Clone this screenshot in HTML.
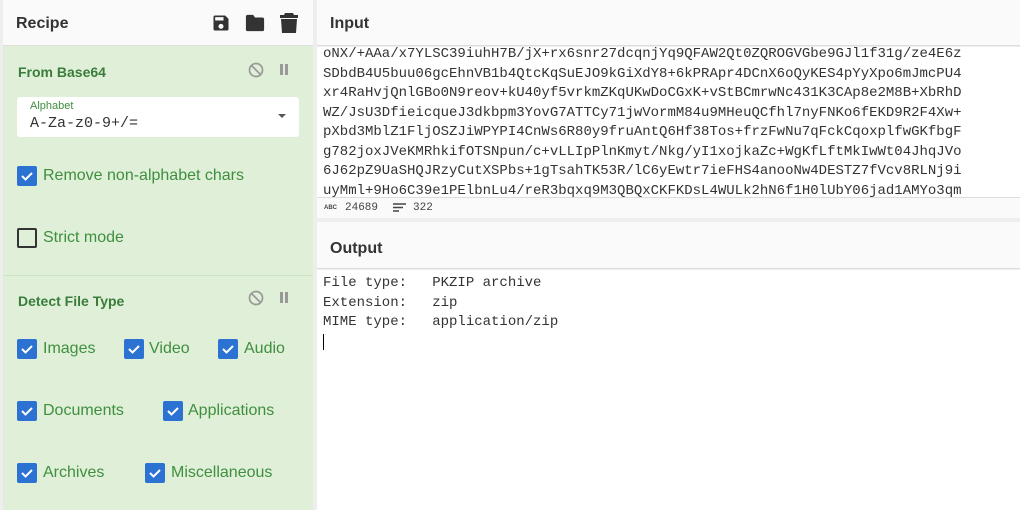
<!DOCTYPE html>
<html><head><style>
*{margin:0;padding:0;box-sizing:border-box}
body{width:1020px;height:510px;overflow:hidden;background:#eee;font-family:"Liberation Sans",sans-serif;position:relative}
.abs{position:absolute}
#left{left:0;top:0;width:313px;height:510px;background:#dfefd8}
#rhead{left:3px;top:0;width:310px;height:46px;background:#fafafa;border-bottom:1px solid #ddd}
.ttl{font-weight:bold;font-size:16px;color:#333}
.opt{font-weight:bold;font-size:14px;color:#3a7d3a}
.lbl{font-size:16px;color:#3f8f3f}
.cb{width:20px;height:20px;background:#2b72d2;border-radius:2px}
.cb svg{display:block}
.mono{font-family:"Liberation Mono",monospace;font-size:14px;color:#333}
</style></head><body>
<div id="left" class="abs"></div>
<div class="abs" style="left:0;top:0;width:3px;height:510px;background:#eee"></div>
<div id="rhead" class="abs"></div>
<div class="abs ttl" style="left:16px;top:15px">Recipe</div>
<svg class="abs" style="left:211px;top:13px" width="20" height="20" viewBox="0 0 24 24"><path fill="#333" d="M17 3H5a2 2 0 0 0-2 2v14a2 2 0 0 0 2 2h14a2 2 0 0 0 2-2V7l-4-4zm-5 16a3 3 0 1 1 0-6 3 3 0 0 1 0 6zm3-10H5V5h10v4z"/></svg>
<svg class="abs" style="left:244px;top:13px" width="22" height="20" viewBox="0 0 24 22"><path fill="#333" d="M10 2H4a2 2 0 0 0-2 2v14a2 2 0 0 0 2 2h16a2 2 0 0 0 2-2V7a2 2 0 0 0-2-2h-8l-2-3z"/></svg>
<svg class="abs" style="left:279px;top:12px" width="20" height="22" viewBox="0 0 20 22"><path fill="#333" d="M6 1h8l1 2h4v3H1V3h4l1-2zM2 7h16l-1 14H3z"/></svg>

<div class="abs opt" style="left:18px;top:64px">From Base64</div>
<svg class="abs" style="left:248px;top:62px" width="16" height="16" viewBox="0 0 16 16"><circle cx="8" cy="8" r="6.5" fill="none" stroke="#999" stroke-width="1.7"/><path d="M3.5 3.5l9 9" stroke="#999" stroke-width="1.7"/></svg>
<div class="abs" style="left:280px;top:64px;width:3px;height:11px;background:#999"></div>
<div class="abs" style="left:285px;top:64px;width:3px;height:11px;background:#999"></div>
<div class="abs" style="left:17px;top:97px;width:282px;height:40px;background:#fff;border-radius:3px"></div>
<div class="abs" style="left:30px;top:100px;font-size:11px;color:#3f8f3f">Alphabet</div>
<div class="abs mono" style="left:30px;top:115px;font-size:15px;color:#333">A-Za-z0-9+/=</div>
<div class="abs" style="left:278px;top:114px;width:0;height:0;border-left:4px solid transparent;border-right:4px solid transparent;border-top:4px solid #555"></div>
<div class="abs cb" style="left:17px;top:166px"><svg width="20" height="20"><path d="M5 10l3.5 3.5L15 7" fill="none" stroke="#fff" stroke-width="2"/></svg></div>
<div class="abs lbl" style="left:43px;top:167px">Remove non-alphabet chars</div>
<div class="abs" style="left:17px;top:228px;width:20px;height:20px;border:2px solid #333;border-radius:2px"></div>
<div class="abs lbl" style="left:43px;top:229px">Strict mode</div>
<div class="abs" style="left:3px;top:275px;width:310px;height:1px;background:#cde5c3"></div>

<div class="abs opt" style="left:18px;top:293px">Detect File Type</div>
<svg class="abs" style="left:248px;top:290px" width="16" height="16" viewBox="0 0 16 16"><circle cx="8" cy="8" r="6.5" fill="none" stroke="#999" stroke-width="1.7"/><path d="M3.5 3.5l9 9" stroke="#999" stroke-width="1.7"/></svg>
<div class="abs" style="left:280px;top:292px;width:3px;height:11px;background:#999"></div>
<div class="abs" style="left:285px;top:292px;width:3px;height:11px;background:#999"></div>

<div class="abs cb" style="left:17px;top:339px"><svg width="20" height="20"><path d="M5 10l3.5 3.5L15 7" fill="none" stroke="#fff" stroke-width="2"/></svg></div>
<div class="abs lbl" style="left:43px;top:340px">Images</div>
<div class="abs cb" style="left:124px;top:339px"><svg width="20" height="20"><path d="M5 10l3.5 3.5L15 7" fill="none" stroke="#fff" stroke-width="2"/></svg></div>
<div class="abs lbl" style="left:149px;top:340px">Video</div>
<div class="abs cb" style="left:218px;top:339px"><svg width="20" height="20"><path d="M5 10l3.5 3.5L15 7" fill="none" stroke="#fff" stroke-width="2"/></svg></div>
<div class="abs lbl" style="left:244px;top:340px">Audio</div>
<div class="abs cb" style="left:17px;top:401px"><svg width="20" height="20"><path d="M5 10l3.5 3.5L15 7" fill="none" stroke="#fff" stroke-width="2"/></svg></div>
<div class="abs lbl" style="left:43px;top:402px">Documents</div>
<div class="abs cb" style="left:163px;top:401px"><svg width="20" height="20"><path d="M5 10l3.5 3.5L15 7" fill="none" stroke="#fff" stroke-width="2"/></svg></div>
<div class="abs lbl" style="left:188px;top:402px">Applications</div>
<div class="abs cb" style="left:17px;top:463px"><svg width="20" height="20"><path d="M5 10l3.5 3.5L15 7" fill="none" stroke="#fff" stroke-width="2"/></svg></div>
<div class="abs lbl" style="left:43px;top:464px">Archives</div>
<div class="abs cb" style="left:145px;top:463px"><svg width="20" height="20"><path d="M5 10l3.5 3.5L15 7" fill="none" stroke="#fff" stroke-width="2"/></svg></div>
<div class="abs lbl" style="left:171px;top:464px">Miscellaneous</div>

<!-- input -->
<div class="abs" style="left:317px;top:0;width:703px;height:46px;background:#fafafa;border-bottom:1px solid #ddd"></div>
<div class="abs ttl" style="left:330px;top:15px">Input</div>
<div class="abs" style="left:317px;top:47px;width:703px;height:150px;background:#fff;overflow:hidden">
<div class="mono" style="position:absolute;left:6px;top:-2px;line-height:19.5px;white-space:pre">oNX/+AAa/x7YLSC39iuhH7B/jX+rx6snr27dcqnjYq9QFAW2Qt0ZQROGVGbe9GJl1f31g/ze4E6z
SDbdB4U5buu06gcEhnVB1b4QtcKqSuEJO9kGiXdY8+6kPRApr4DCnX6oQyKES4pYyXpo6mJmcPU4
xr4RaHvjQnlGBo0N9reov+kU40yf5vrkmZKqUKwDoCGxK+vStBCmrwNc431K3CAp8e2M8B+XbRhD
WZ/JsU3DfieicqueJ3dkbpm3YovG7ATTCy71jwVormM84u9MHeuQCfhl7nyFNKo6fEKD9R2F4Xw+
pXbd3MblZ1FljOSZJiWPYPI4CnWs6R80y9fruAntQ6Hf38Tos+frzFwNu7qFckCqoxplfwGKfbgF
g782joxJVeKMRhkifOTSNpun/c+vLLIpPlnKmyt/Nkg/yI1xojkaZc+WgKfLftMkIwWt04JhqJVo
6J62pZ9UaSHQJRzyCutXSPbs+1gTsahTK53R/lC6yEwtr7ieFHS4anooNw4DESTZ7fVcv8RLNj9i
uyMml+9Ho6C39e1PElbnLu4/reR3bqxq9M3QBQxCKFKDsL4WULk2hN6f1H0lUbY06jad1AMYo3qm</div></div>
<div class="abs" style="left:317px;top:197px;width:703px;height:21px;background:#fafafa;border-top:1px solid #ddd"></div>
<div class="abs" style="left:324px;top:205px;font-size:6px;font-weight:bold;color:#444">ABC</div>
<div class="abs mono" style="left:345px;top:202px;font-size:11px;color:#444">24689</div>
<svg class="abs" style="left:393px;top:203px" width="14" height="10"><path d="M0 1h13M0 4.5h10M0 8h6" stroke="#444" stroke-width="1.5"/></svg>
<div class="abs mono" style="left:413px;top:202px;font-size:11px;color:#444">322</div>

<!-- output -->
<div class="abs" style="left:317px;top:222px;width:703px;height:47px;background:#fafafa;border-bottom:1px solid #ddd"></div>
<div class="abs ttl" style="left:330px;top:240px">Output</div>
<div class="abs" style="left:317px;top:270px;width:703px;height:240px;background:#fff"></div>
<div class="abs mono" style="left:323px;top:274px;line-height:19.7px;white-space:pre">File type:   PKZIP archive
Extension:   zip
MIME type:   application/zip</div>
<div class="abs" style="left:323px;top:334px;width:1px;height:16px;background:#000"></div>
</body></html>
